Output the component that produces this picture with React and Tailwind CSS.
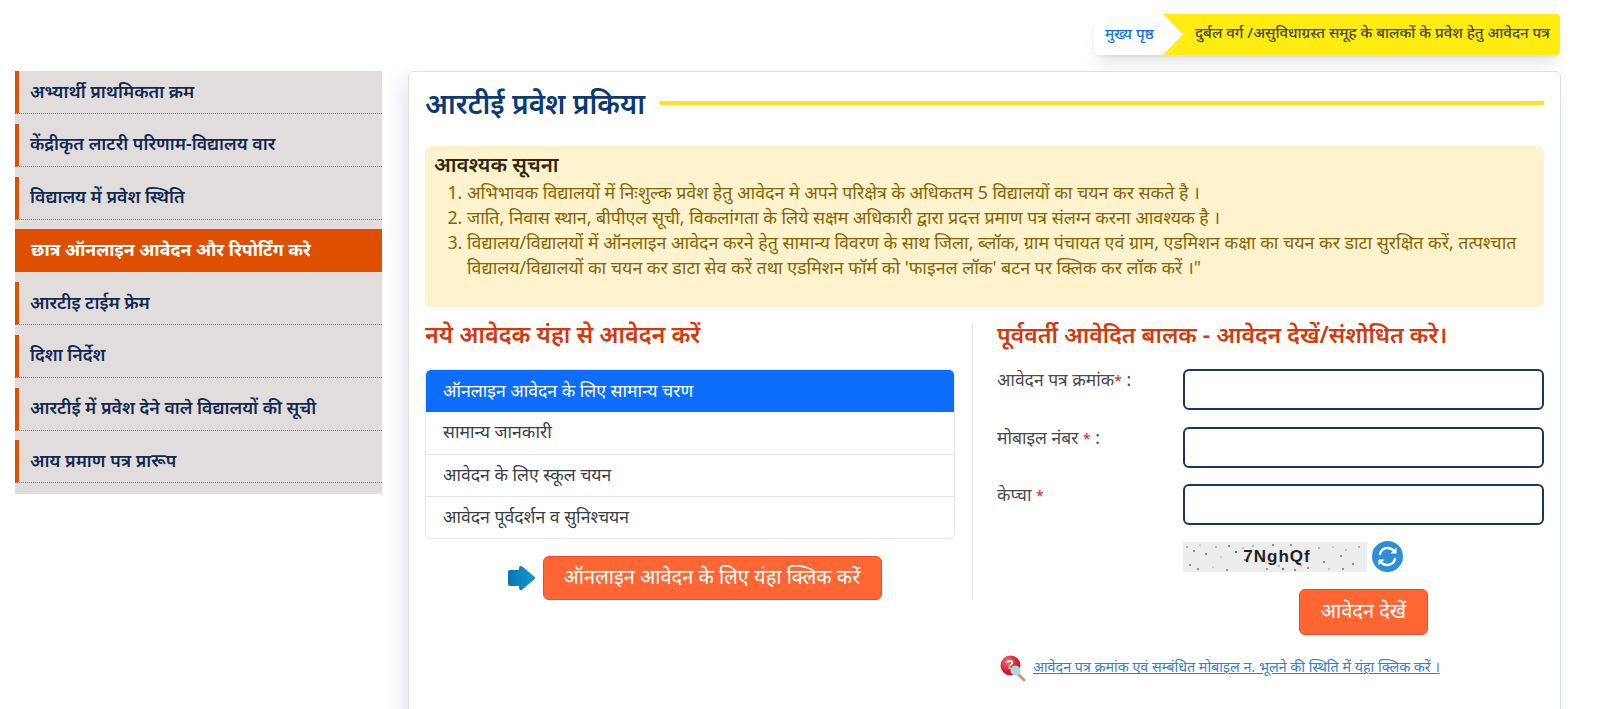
import React from 'react';

const sideItems = [
    'अभ्यार्थी प्राथमिकता क्रम',
    'केंद्रीकृत लाटरी परिणाम-विद्यालय वार',
    'विद्यालय में प्रवेश स्थिति',
    'छात्र ऑनलाइन आवेदन और रिपोर्टिंग करे',
    'आरटीइ टाईम फ्रेम',
    'दिशा निर्देश',
    'आरटीई में प्रवेश देने वाले विद्यालयों की सूची',
    'आय प्रमाण पत्र प्रारूप',
];

const steps = [
    'सामान्य जानकारी',
    'आवेदन के लिए स्कूल चयन',
    'आवेदन पूर्वदर्शन व सुनिश्चयन',
];

const fields = [
    { label: 'आवेदन पत्र क्रमांक', suffix: ' :' },
    { label: 'मोबाइल नंबर ', suffix: ' :' },
    { label: 'केप्चा ', suffix: '' },
];

// speckles on the captcha image: x, y, radius
const dots = [
    [4, 5, 0.8], [11, 9, 1], [17, 3, 0.6], [23, 12, 1.1], [33, 5, 0.7], [38, 15, 0.6], [46, 4, 1], [53, 10, 1.2], [60, 6, 0.7],
    [7, 23, 0.9], [15, 27, 1], [30, 25, 0.6], [44, 28, 0.9], [62, 18, 1], [70, 4, 0.8], [76, 14, 0.6], [90, 3, 1], [100, 27, 1.2],
    [108, 3, 1], [112, 28, 1.1], [118, 24, 0.7], [125, 26, 0.9], [136, 6, 0.8], [141, 20, 1], [150, 5, 0.6], [158, 14, 0.9],
    [163, 8, 0.7], [170, 22, 1], [176, 5, 0.8], [160, 27, 1], [146, 27, 0.7], [96, 24, 0.8], [84, 27, 0.9],
];

const App = () => {
    return (
        <div className="h-[709px] overflow-hidden bg-white font-['Noto_Sans','Liberation_Sans',sans-serif]">
            {/* Breadcrumb */}
            <div className="flex justify-end pt-[14px] pr-[40px] h-[71px]">
                <div className="flex h-[41px] rounded-md shadow-lg">
                    <div className="flex items-center w-[69px] pl-[11px] pb-[2px] bg-white rounded-l-md text-[15px] font-medium text-[#0d6efd] whitespace-nowrap">
                        मुख्य पृष्ठ
                    </div>
                    <div className="flex items-center w-[397px] pl-[32px] pb-[4px] bg-[#ffec10] rounded-r-sm text-[15px] font-medium text-[#4b4a1c] whitespace-nowrap [clip-path:polygon(0_0,100%_0,100%_100%,0_100%,20px_50%)]">
                        दुर्बल वर्ग /असुविधाग्रस्त समूह के बालकों के प्रवेश हेतु आवेदन पत्र
                    </div>
                </div>
            </div>

            <div className="flex items-start pl-[15px] pr-[40px] gap-[26px]">
                {/* Sidebar */}
                <aside className="w-[367px] shrink-0 bg-[#e1dddd] h-[423px]">
                    {sideItems.map((item, i) => (
                        <div
                            key={item}
                            className={
                                i === 3
                                    ? 'flex items-center h-[43px] mb-[9.75px] pl-[16px] pb-[2px] bg-[#e04e00] text-[17.75px] font-bold text-white whitespace-nowrap'
                                    : 'flex items-center h-[43px] mb-[9.75px] pl-[11px] pb-[2px] border-l-4 border-[#e04e00] border-b border-b-[#777] [border-bottom-style:dotted] text-[17.75px] font-semibold text-[#12294f] whitespace-nowrap'
                            }
                        >
                            {item}
                        </div>
                    ))}
                </aside>

                {/* Main card */}
                <main className="flex-1 h-[660px] bg-white border border-[#dcdfe3] rounded-md shadow-[-8px_8px_20px_rgba(120,140,170,0.18)] px-4">
                    <div className="flex items-center gap-[15px] h-[61px]">
                        <h1 className="text-[28px] font-semibold text-[#0b3a75] whitespace-nowrap">आरटीई प्रवेश प्रकिया</h1>
                        <div className="flex-1 h-1 bg-[#ffe21a]" />
                    </div>

                    <div className="mt-[13px] h-[161px] bg-[#fff3cd] rounded-md pt-[6px] pl-[9px] pr-[24px]">
                        <h2 className="text-[20.5px] leading-[25px] font-semibold text-[#33290a]">आवश्यक सूचना</h2>
                        <ol className="mt-[3px] list-decimal pl-[33px] text-[17.75px] leading-[25px] text-[#856404]">
                            <li>अभिभावक विद्यालयों में निःशुल्क प्रवेश हेतु आवेदन मे अपने परिक्षेत्र के अधिकतम 5 विद्यालयों का चयन कर सकते है ।</li>
                            <li>जाति, निवास स्थान, बीपीएल सूची, विकलांगता के लिये सक्षम अधिकारी द्वारा प्रदत्त प्रमाण पत्र संलग्न करना आवश्यक है ।</li>
                            <li>विद्यालय/विद्यालयों में ऑनलाइन आवेदन करने हेतु सामान्य विवरण के साथ जिला, ब्लॉक, ग्राम पंचायत एवं ग्राम, एडमिशन कक्षा का चयन कर डाटा सुरक्षित करें, तत्पश्चात विद्यालय/विद्यालयों का चयन कर डाटा सेव करें तथा एडमिशन फॉर्म को 'फाइनल लॉक' बटन पर क्लिक कर लॉक करें ।"</li>
                        </ol>
                    </div>

                    <div className="flex mt-[16px]">
                        {/* New applicants */}
                        <div className="w-[530px] shrink-0">
                            <h3 className="h-[22px] text-[23.4px] leading-[22px] font-semibold text-[#d4380d] whitespace-nowrap">नये आवेदक यंहा से आवेदन करें</h3>
                            <ul className="mt-[24px] border border-[#e3e5e8] rounded-md overflow-hidden text-[17.6px] text-[#3a3f45]">
                                <li className="flex items-center h-[42px] pl-[17px] pb-[2px] bg-[#0d6efd] text-white">ऑनलाइन आवेदन के लिए सामान्य चरण</li>
                                {steps.map((step, i) => (
                                    <li key={step} className={`flex items-center h-[42px] pl-[17px] pb-[3px] ${i > 0 ? 'border-t border-[#e3e5e8]' : ''}`}>
                                        {step}
                                    </li>
                                ))}
                            </ul>
                            <div className="flex justify-center items-center gap-[7px] mt-[17px] pl-[8px]">
                                <svg width="29" height="26" viewBox="0 0 29 26">
                                    <defs>
                                        <linearGradient id="arrowFill" x1="0" y1="0" x2="1" y2="0">
                                            <stop offset="0" stopColor="#0a78b8" />
                                            <stop offset="1" stopColor="#1596c9" />
                                        </linearGradient>
                                    </defs>
                                    <path d="M3 7h11V3l12 10-12 10v-4H3z" fill="url(#arrowFill)" stroke="url(#arrowFill)" strokeWidth="4" strokeLinejoin="round" />
                                </svg>
                                <button className="w-[339px] h-[44px] pb-[2px] bg-[#ff6633] border border-[#ee4a2a] rounded-md text-[20px] text-white whitespace-nowrap">
                                    ऑनलाइन आवेदन के लिए यंहा क्लिक करें
                                </button>
                            </div>
                        </div>

                        {/* Previous applicants */}
                        <div className="flex-1 min-w-0 relative ml-[17px]">
                            <div className="border-l border-[#e3e5e8] h-[277px] pl-[24px]">
                                <h3 className="h-[22px] text-[23px] leading-[22px] font-semibold text-[#d4380d] whitespace-nowrap">पूर्ववर्ती आवेदित बालक - आवेदन देखें/संशोधित करे।</h3>
                                <div className="mt-[24px] flex flex-col gap-[16.5px]">
                                    {fields.map((field) => (
                                        <div key={field.label} className="flex h-[41px]">
                                            <label className="w-[186px] shrink-0 text-[17.5px] leading-[20px] text-[#4a4a4a] whitespace-nowrap">
                                                {field.label}
                                                <span className="text-[14px] text-[#e02020]">*</span>
                                                {field.suffix}
                                            </label>
                                            <input className="w-[361px] h-[41px] bg-white border-2 border-[#1d3266] rounded-md" />
                                        </div>
                                    ))}
                                </div>
                                <div className="flex items-center gap-[5px] mt-[16px] ml-[186px]">
                                    <div className="relative flex items-center justify-center w-[184px] h-[30px] bg-[#ededee]">
                                        <svg className="absolute inset-0" width="184" height="30" viewBox="0 0 184 30">
                                            {dots.map(([x, y, r]) => (
                                                <circle key={`${x}-${y}`} cx={x} cy={y} r={r} fill="#6f6f72" />
                                            ))}
                                        </svg>
                                        <span className="relative ml-[4px] font-['Liberation_Sans',sans-serif] text-[17px] font-bold tracking-[1px] text-[#222]">7NghQf</span>
                                    </div>
                                    <svg width="31" height="31" viewBox="0 0 31 31">
                                        <circle cx="15.5" cy="15.5" r="15.5" fill="#2e8fd8" />
                                        <path d="M8 13a8 8 0 0 1 14-3" fill="none" stroke="#fff" strokeWidth="2.4" strokeLinecap="round" />
                                        <path d="M23 18a8 8 0 0 1-14 3" fill="none" stroke="#fff" strokeWidth="2.4" strokeLinecap="round" />
                                        <path d="M24.5 6.5v6h-6z" fill="#fff" />
                                        <path d="M6.5 24.5v-6h6z" fill="#fff" />
                                    </svg>
                                </div>
                            </div>
                            <button className="absolute left-[327px] top-[266px] w-[129px] h-[46px] pb-[2px] bg-[#ff6633] border border-[#ee4a2a] rounded-md text-[20px] text-white whitespace-nowrap">
                                आवेदन देखें
                            </button>
                            <div className="absolute left-[28px] top-[332px] flex items-center gap-[7px] whitespace-nowrap">
                                <svg width="26" height="27" viewBox="0 0 26 27">
                                    <defs>
                                        <radialGradient id="helpBall" cx="0.35" cy="0.3" r="0.8">
                                            <stop offset="0" stopColor="#f07078" />
                                            <stop offset="0.6" stopColor="#d3202a" />
                                            <stop offset="1" stopColor="#a5121c" />
                                        </radialGradient>
                                    </defs>
                                    <path d="M17 18l7 7" stroke="#c9a06a" strokeWidth="3" strokeLinecap="round" />
                                    <circle cx="10.5" cy="10.5" r="10" fill="url(#helpBall)" />
                                    <circle cx="15.5" cy="15.5" r="5" fill="#a8d8e8" />
                                    <text x="10" y="14" textAnchor="middle" fontSize="13" fontWeight="700" fontFamily="Liberation Sans" fill="#fff">?</text>
                                </svg>
                                <a href="#" className="-mt-[3px] text-[14.3px] text-[#2f7fe0] underline">
                                    आवेदन पत्र क्रमांक एवं सम्बंधित मोबाइल न. भूलने की स्थिति में यंहा क्लिक करें ।
                                </a>
                            </div>
                        </div>
                    </div>
                </main>
            </div>
        </div>
    );
};

export default App;
